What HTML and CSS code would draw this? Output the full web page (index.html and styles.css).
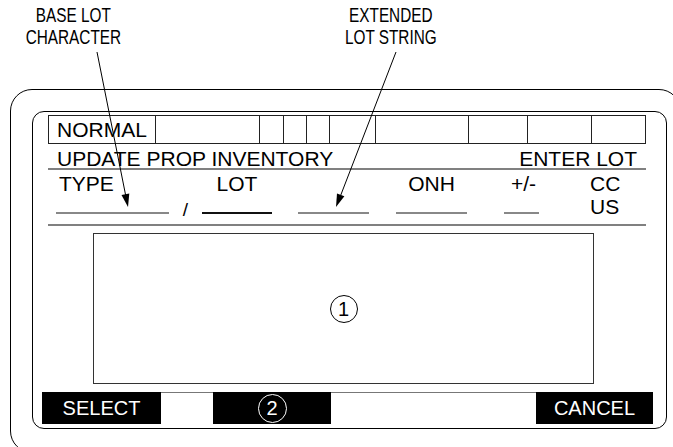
FILE: index.html
```html
<!DOCTYPE html>
<html>
<head>
<meta charset="utf-8">
<link rel="stylesheet" href="styles.css">
</head>
<body>
<div class="page">
  <div class="callouts">
    <div class="callout callout-base"><span>BASE LOT<br>CHARACTER</span></div>
    <div class="callout callout-ext"><span>EXTENDED<br>LOT STRING</span></div>
  </div>
  <div class="bezel">
    <div class="screen">
      <div class="status">
        <div class="cell cell-mode">NORMAL</div>
        <div class="cell"></div>
        <div class="cell"></div>
        <div class="cell"></div>
        <div class="cell"></div>
        <div class="cell"></div>
        <div class="cell"></div>
        <div class="cell"></div>
        <div class="cell"></div>
        <div class="cell"></div>
      </div>
      <div class="title-row"><span>UPDATE PROP INVENTORY</span><span>ENTER LOT</span></div>
      <div class="fields">
        <div class="field f-type">TYPE</div>
        <div class="slash">/</div>
        <div class="field f-lot">LOT</div>
        <div class="field f-ext"></div>
        <div class="field f-onh">ONH</div>
        <div class="field f-adj">+/-</div>
        <div class="f-ccus">CC<br>US</div>
      </div>
      <div class="list-box"><span class="num-circle">1</span></div>
      <div class="softkeys">
        <div class="key key-select">SELECT</div>
        <div class="key key-2"><span class="num-circle inverse">2</span></div>
        <div class="key key-cancel">CANCEL</div>
      </div>
    </div>
  </div>
  <svg class="leaders" width="673" height="447" viewBox="0 0 673 447">
    <line x1="97" y1="52" x2="125.6" y2="195" stroke="#000" stroke-width="1"/>
    <polygon points="128,207 129.3,193.5 121.5,195.1" fill="#000"/>
    <line x1="396" y1="52" x2="340.8" y2="195" stroke="#000" stroke-width="1"/>
    <polygon points="336,207 344.4,196.3 337,193.4" fill="#000"/>
  </svg>
</div>
</body>
</html>
```

FILE: styles.css
```css
body {
  margin: 0;
  background: #fff;
  color: #000;
  font-family: "Liberation Sans", Arial, Helvetica, sans-serif;
}

.page {
  position: relative;
  width: 673px;
  height: 447px;
  overflow: hidden;
}

.callouts {
  display: flex;
  height: 89px;
  box-sizing: border-box;
  padding-top: 4px;
  font-size: 21px;
  line-height: 22px;
}

.callout {
  text-align: center;
  white-space: nowrap;
}

.callout span {
  display: inline-block;
  transform: scaleX(0.73);
}

.callout-base {
  width: 146px;
}

.callout-ext {
  width: 160px;
  margin-left: 165px;
}

.bezel {
  margin-left: 10px;
  width: 671px;
  height: 364px;
  box-sizing: border-box;
  border: 1px solid #000;
  border-radius: 22px;
  padding: 21px 0 0 21px;
}

.screen {
  width: 635px;
  box-sizing: border-box;
  border: 1px solid #000;
  border-radius: 12px;
  padding: 3px 20px 4px 15px;
}

.status {
  display: grid;
  grid-template-columns: 107px 104px 24px 23px 23px 46px 93px 59px 64px 53px;
  height: 29px;
  box-sizing: border-box;
  border: 1px solid #222;
}

.cell {
  border-right: 1px solid #222;
}

.cell:last-child {
  border-right: 0;
}

.cell-mode {
  padding-left: 8px;
  font-size: 21px;
  line-height: 27px;
}

.title-row {
  display: flex;
  justify-content: space-between;
  height: 26px;
  box-sizing: border-box;
  padding: 5px 9px 0 9px;
  border-bottom: 2px solid #808080;
  font-size: 21px;
  line-height: 19px;
}

.fields {
  display: flex;
  height: 56px;
  box-sizing: border-box;
  border-bottom: 2px solid #808080;
  font-size: 21px;
  line-height: 23px;
}

.field {
  height: 44px;
  box-sizing: border-box;
  padding-top: 2px;
  border-bottom: 2px solid #888;
  text-align: center;
}

.f-type {
  margin-left: 8px;
  width: 113px;
  padding-left: 3px;
  text-align: left;
}

.slash {
  width: 33px;
  padding-top: 28px;
  text-align: center;
  font-size: 19px;
}

.f-lot {
  width: 70px;
  border-bottom-color: #111;
}

.f-ext {
  margin-left: 26px;
  width: 71px;
}

.f-onh {
  margin-left: 27px;
  width: 71px;
}

.f-adj {
  margin-left: 37px;
  width: 35px;
  padding-left: 4px;
}

.f-ccus {
  margin-left: 51px;
  padding-top: 2px;
}

.list-box {
  margin: 7px 0 0 45px;
  width: 501px;
  height: 151px;
  box-sizing: border-box;
  border: 1px solid #333;
  display: flex;
  align-items: center;
  justify-content: center;
}

.num-circle {
  width: 28px;
  height: 28px;
  box-sizing: border-box;
  border: 1px solid #000;
  border-radius: 50%;
  display: flex;
  align-items: center;
  justify-content: center;
  font-size: 20px;
  line-height: 1;
}

.num-circle.inverse {
  border: 1.5px solid #fff;
  width: 29px;
  height: 29px;
}

.softkeys {
  display: flex;
  height: 32px;
  margin: 8px -7px 0 -6px;
  background: linear-gradient(#777, #777) top left / 100% 1px no-repeat;
}

.key {
  background: #000;
  color: #fff;
  font-size: 20px;
  display: flex;
  align-items: center;
  justify-content: center;
}

.key-select {
  width: 119px;
}

.key-2 {
  width: 118px;
  margin-left: 52px;
}

.key-cancel {
  width: 117px;
  margin-left: auto;
}

.leaders {
  position: absolute;
  left: 0;
  top: 0;
  pointer-events: none;
}
```
